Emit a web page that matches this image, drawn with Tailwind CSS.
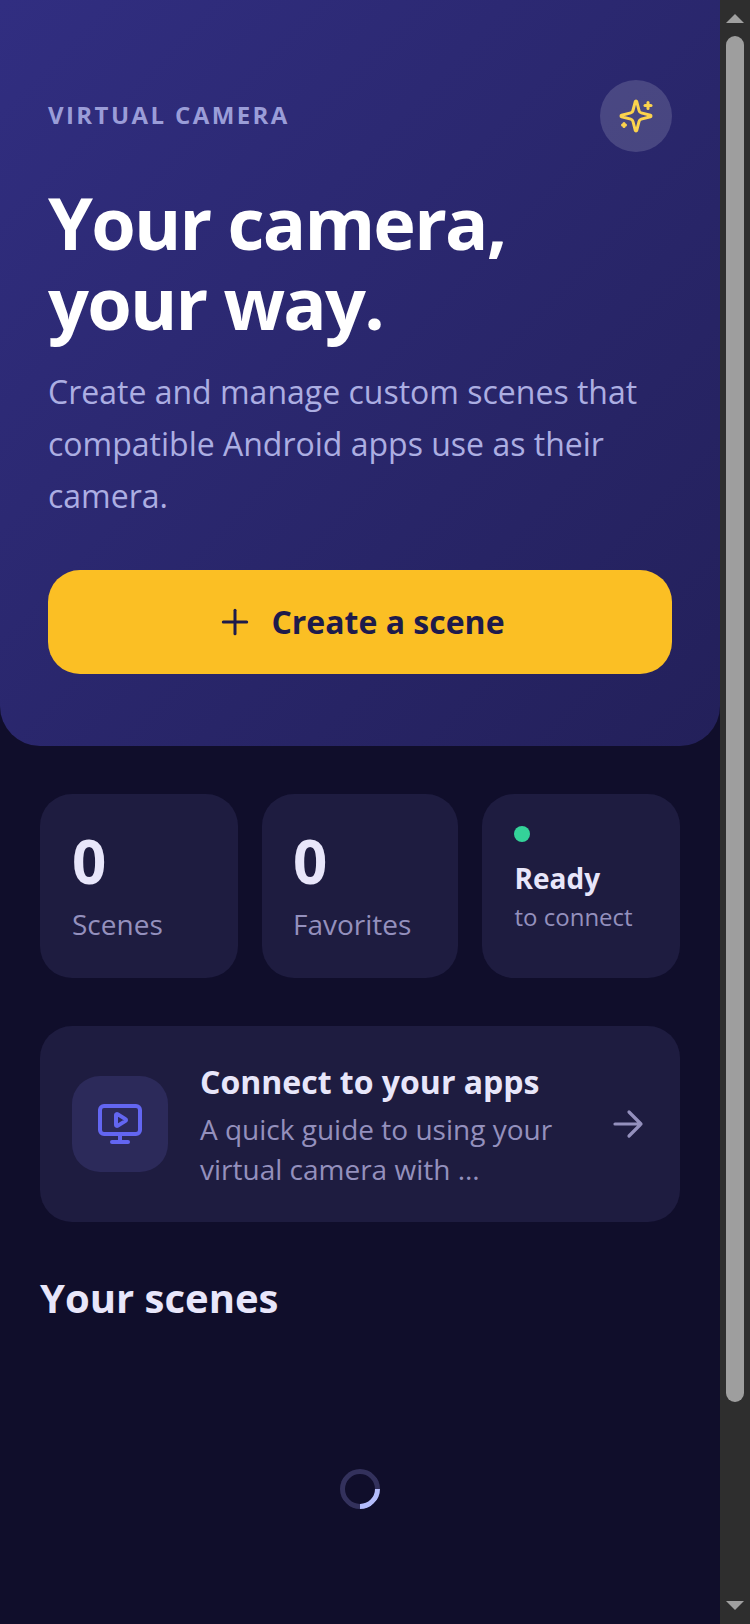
<!doctype html>
<html>
<head>
<meta charset="utf-8">
<script src="https://cdn.jsdelivr.net/npm/@tailwindcss/browser@4"></script>
</head>
<body class="m-0 overflow-hidden bg-[#100e2b]">
<div class="flex h-[1624px] w-[750px] font-['Open_Sans','Noto_Sans',sans-serif] overflow-hidden">
  <main class="w-[720px] shrink-0 bg-[#100e2b]">
    <section class="h-[746px] rounded-b-[40px] bg-gradient-to-br from-[#312e81] to-[#23205a] px-[48px] pt-[80px]">
      <div class="flex items-center justify-between h-[72px]">
        <span class="mt-[-2px] text-[24px] font-bold tracking-[0.1em] text-[#9a9dd8] leading-[32px]">VIRTUAL CAMERA</span>
        <div class="flex h-[72px] w-[72px] items-center justify-center rounded-full bg-white/15">
          <svg width="36" height="36" viewBox="0 0 24 24" fill="none" stroke="#fcd34d" stroke-width="2" stroke-linecap="round" stroke-linejoin="round"><path d="M9.937 15.5A2 2 0 0 0 8.5 14.063l-6.135-1.582a.5.5 0 0 1 0-.962L8.5 9.936A2 2 0 0 0 9.937 8.5l1.582-6.135a.5.5 0 0 1 .963 0L14.063 8.5A2 2 0 0 0 15.5 9.937l6.135 1.581a.5.5 0 0 1 0 .964L15.5 14.063a2 2 0 0 0-1.437 1.437l-1.582 6.135a.5.5 0 0 1-.963 0z"/><path d="M20 3v4"/><path d="M22 5h-4"/><path d="M4 17v2"/><path d="M5 18H3"/></svg>
        </div>
      </div>
      <h1 class="mt-[30px] text-[72px] font-bold leading-[80px] text-white tracking-[-1.76px]">Your camera,<br>your way.</h1>
      <p class="mt-[24px] text-[32px] leading-[52px] text-[#acaee2]">Create and manage custom scenes that compatible Android apps use as their camera.</p>
      <button class="mt-[48px] flex h-[104px] w-full items-center justify-center gap-[16px] rounded-[32px] bg-[#fbbf24] text-[32px] font-bold text-[#1e1b4b]">
        <svg width="40" height="40" viewBox="0 0 24 24" fill="none" stroke="#1e1b4b" stroke-width="1.8" stroke-linecap="round"><path d="M5 12h14"/><path d="M12 5v14"/></svg>
        Create a scene
      </button>
    </section>

    <div class="mt-[48px] px-[40px] grid grid-cols-[198px_196px_198px] gap-[24px]">
      <div class="h-[184px] rounded-[32px] bg-[#1e1c40] px-[32px] pt-[31px]">
        <div class="text-[60px] font-bold leading-[72px] text-[#e8e6fa]">0</div>
        <div class="mt-[7px] text-[28px] leading-[40px] text-[#9490bd]">Scenes</div>
      </div>
      <div class="h-[184px] rounded-[32px] bg-[#1e1c40] pl-[31px] pr-[32px] pt-[31px]">
        <div class="text-[60px] font-bold leading-[72px] text-[#e8e6fa]">0</div>
        <div class="mt-[7px] text-[28px] leading-[40px] text-[#9490bd]">Favorites</div>
      </div>
      <div class="h-[184px] rounded-[32px] bg-[#1e1c40] px-[32px] pt-[32px]">
        <div class="h-[16px] w-[16px] rounded-full bg-[#34d399]"></div>
        <div class="ml-[0.5px] mt-[16px] text-[28px] font-bold leading-[40px] text-[#e8e6fa]">Ready</div>
        <div class="ml-[0.5px] mt-[1px] text-[24px] leading-[36px] text-[#9490bd]">to connect</div>
      </div>
    </div>

    <div class="mx-[40px] mt-[48px] flex h-[196px] items-center rounded-[32px] bg-[#1e1c40] px-[32px]">
      <div class="flex h-[96px] w-[96px] shrink-0 items-center justify-center rounded-[28px] bg-[#2c2a5a]">
        <svg width="48" height="48" viewBox="0 0 24 24" fill="none" stroke="#6366f1" stroke-width="2" stroke-linecap="round" stroke-linejoin="round"><rect x="2" y="3" width="20" height="14" rx="2"/><path d="M12 17v4"/><path d="M8 21h8"/><path d="M10 7.5v5a.5.5 0 0 0 .76.43l4-2.5a.5.5 0 0 0 0-.86l-4-2.5A.5.5 0 0 0 10 7.5z"/></svg>
      </div>
      <div class="ml-[32px] min-w-0 flex-1 pt-[1px]">
        <div class="text-[32px] font-bold leading-[44px] text-[#e8e6fa]">Connect to your apps</div>
        <div class="mt-[5px] text-[28px] leading-[40px] text-[#9490bd]">A quick guide to using your<br>virtual camera with ...</div>
      </div>
      <svg class="shrink-0" width="40" height="40" viewBox="0 0 40 40" fill="none" stroke="#9490bd" stroke-width="3.2" stroke-linecap="round" stroke-linejoin="round"><path d="M7 20h26M21 8l12 12-12 12"/></svg>
    </div>

    <h2 class="mx-[40px] mt-[48px] text-[40px] font-bold leading-[56px] text-[#e8e6fa]">Your scenes</h2>

    <div class="mt-[143px] flex justify-center">
      <div class="h-[40px] w-[40px] rounded-full border-[5px] border-[#33315c] border-r-[#b4bcfc] rotate-45"></div>
    </div>
  </main>

  <aside class="relative flex w-[30px] shrink-0 flex-col items-center bg-[#2e2e2e]">
    <div class="mt-[14px] h-0 w-0 border-x-[9px] border-b-[9px] border-x-transparent border-b-[#a0a0a0]"></div>
    <div class="mt-[13px] h-[1366px] w-[18px] rounded-full bg-[#9e9e9e]"></div>
    <div class="mt-auto mb-[14px] h-0 w-0 border-x-[9px] border-t-[9px] border-x-transparent border-t-[#a0a0a0]"></div>
  </aside>
</div>
</body>
</html>
